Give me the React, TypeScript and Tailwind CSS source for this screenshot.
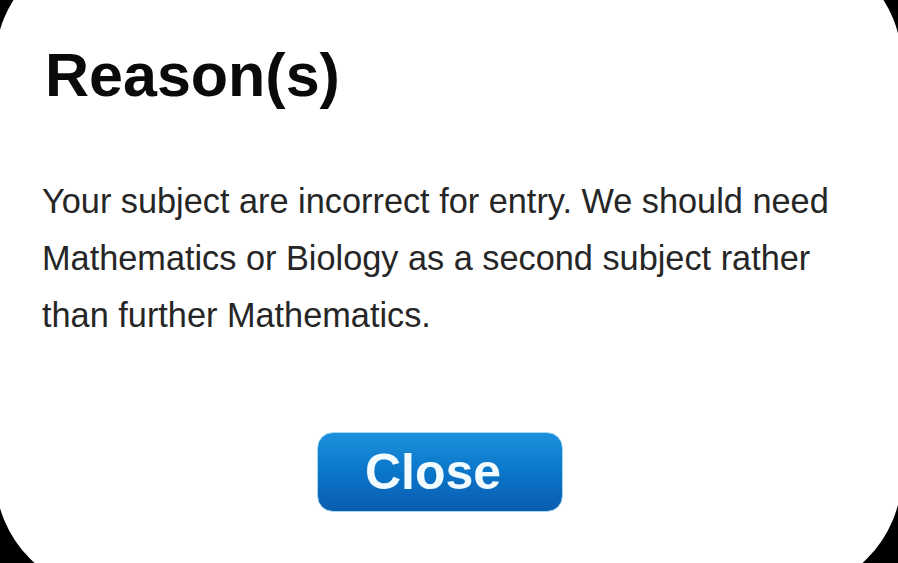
const App = () => {
  return (
    <div className="h-[563px] w-[898px] overflow-hidden bg-black font-['Liberation_Sans',Arial,sans-serif]">
      <div className="-ml-[5px] -mt-[56px] h-[650px] w-[907px] rounded-[120px] bg-white pl-[47px] pt-[101px]">
        <h1 className="ml-[3px] text-[61px] font-bold leading-none text-[#0a0a0a]">
          Reason(s)
        </h1>

        <p className="mt-[67px] w-[815px] text-[34.3px] leading-[57px] text-[#262626]">
          Your subject are incorrect for entry. We should need Mathematics or
          Biology as a second subject rather than further Mathematics.
        </p>

        <button className="ml-[275px] mt-[88px] flex h-[80px] w-[246px] items-center justify-center rounded-[16px] border border-[#a9daf5] bg-gradient-to-b from-[#1c90dc] via-[#0a76c9] to-[#0b5cb0] pr-[14px] text-[50px] font-bold text-[#f2fbff]">
          Close
        </button>
      </div>
    </div>
  );
};

export default App;
